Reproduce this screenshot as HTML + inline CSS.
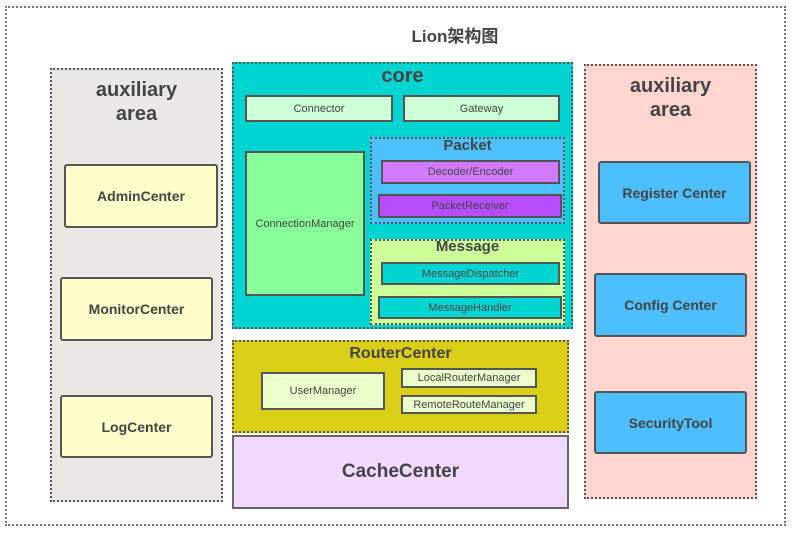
<!DOCTYPE html>
<html><head><meta charset="utf-8"><style>
*{margin:0;padding:0;box-sizing:border-box}
body{width:795px;height:533px;background:#fff;position:relative;overflow:hidden;font-family:"Liberation Sans","Noto Sans CJK SC",sans-serif;color:#444}
.a{position:absolute;display:flex;align-items:center;justify-content:center;text-align:center}
.d{border:2px dotted #555}
.s{border:2px solid #555}
.b{font-weight:bold}
.t{position:absolute;font-weight:bold;text-align:center;color:#444}
</style></head><body>
<div class="a d" style="left:5px;top:6px;width:781px;height:520px;border-color:#777"></div>
<div class="t" style="left:355px;top:22px;width:200px;font-size:17px">Lion架构图</div>

<div class="a d" style="left:50px;top:68px;width:173px;height:434px;background:#eae8e5"></div>
<div class="t" style="left:50px;top:78px;width:173px;font-size:20px;line-height:24px">auxiliary<br>area</div>
<div class="a s b" style="left:64px;top:164px;width:154px;height:64px;background:#ffffcc;border-radius:3px;font-size:14px">AdminCenter</div>
<div class="a s b" style="left:60px;top:277px;width:153px;height:64px;background:#ffffcc;border-radius:3px;font-size:14px">MonitorCenter</div>
<div class="a s b" style="left:60px;top:395px;width:153px;height:63px;background:#ffffcc;border-radius:3px;font-size:14px">LogCenter</div>

<div class="a d" style="left:584px;top:64px;width:173px;height:435px;background:#ffd5cf"></div>
<div class="t" style="left:584px;top:74px;width:173px;font-size:20px;line-height:24px">auxiliary<br>area</div>
<div class="a s b" style="left:598px;top:161px;width:153px;height:63px;background:#4dbfff;border-radius:3px;font-size:14px">Register Center</div>
<div class="a s b" style="left:594px;top:273px;width:153px;height:64px;background:#4dbfff;border-radius:3px;font-size:14px">Config Center</div>
<div class="a s b" style="left:594px;top:391px;width:153px;height:63px;background:#4dbfff;border-radius:3px;font-size:14px">SecurityTool</div>

<div class="a d" style="left:232px;top:62px;width:341px;height:267px;background:#00d5d2"></div>
<div class="t" style="left:232px;top:65px;width:341px;font-size:20px">core</div>
<div class="a s" style="left:245px;top:95px;width:148px;height:27px;background:#ccffd5;font-size:11px">Connector</div>
<div class="a s" style="left:403px;top:95px;width:157px;height:27px;background:#ccffd5;font-size:11px">Gateway</div>
<div class="a s" style="left:245px;top:151px;width:120px;height:145px;background:#88ff99;font-size:11px">ConnectionManager</div>
<div class="a d" style="left:370px;top:137px;width:195px;height:87px;background:#4dc0ff"></div>
<div class="t" style="left:370px;top:137px;width:195px;font-size:15px">Packet</div>
<div class="a s" style="left:381px;top:160px;width:179px;height:24px;background:#d27bff;font-size:11px">Decoder/Encoder</div>
<div class="a s" style="left:378px;top:194px;width:184px;height:24px;background:#b84dff;font-size:11px">PacketReceiver</div>
<div class="a d" style="left:370px;top:239px;width:195px;height:86px;background:#ccff99"></div>
<div class="t" style="left:370px;top:238px;width:195px;font-size:15px">Message</div>
<div class="a s" style="left:381px;top:262px;width:179px;height:23px;background:#00d5d2;font-size:11px">MessageDispatcher</div>
<div class="a s" style="left:378px;top:296px;width:184px;height:23px;background:#00d5d2;font-size:11px">MessageHandler</div>

<div class="a d" style="left:232px;top:340px;width:337px;height:93px;background:#dbce16"></div>
<div class="t" style="left:232px;top:345px;width:337px;font-size:16px">RouterCenter</div>
<div class="a s" style="left:261px;top:372px;width:124px;height:38px;background:#eaffcc;font-size:11px">UserManager</div>
<div class="a s" style="left:401px;top:368px;width:136px;height:20px;background:#eaffcc;font-size:11px">LocalRouterManager</div>
<div class="a s" style="left:401px;top:395px;width:136px;height:19px;background:#eaffcc;font-size:11px">RemoteRouteManager</div>

<div class="a b" style="left:232px;top:435px;width:337px;height:74px;background:#f2d9ff;border:2px solid #666;font-size:19px">CacheCenter</div>
</body></html>
